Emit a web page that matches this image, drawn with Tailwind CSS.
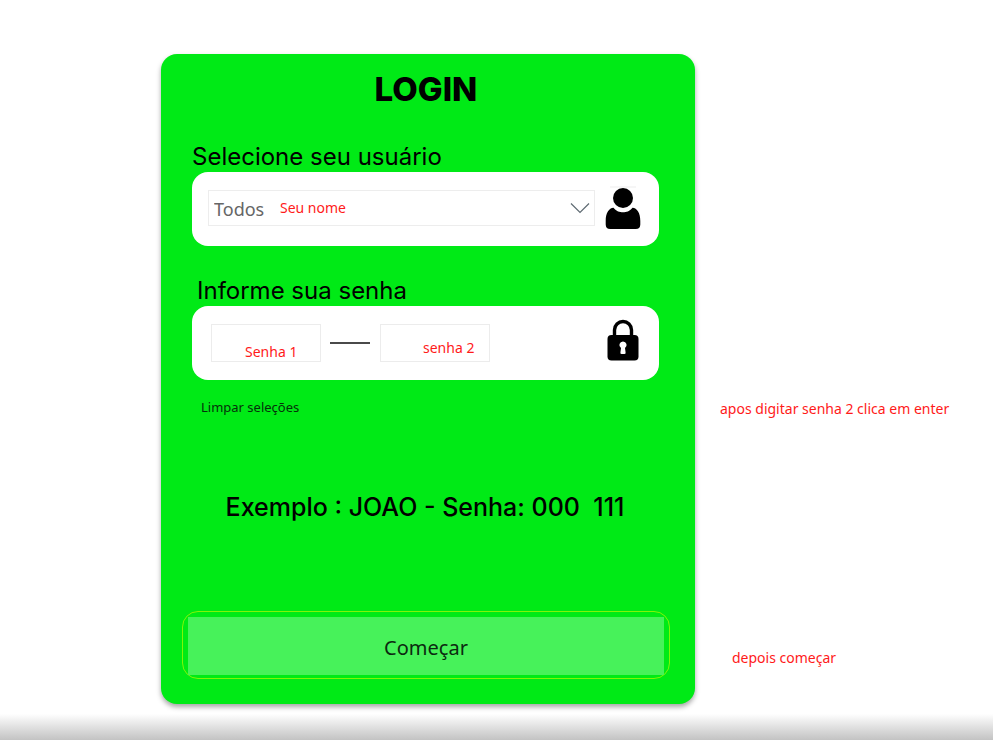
<!DOCTYPE html>
<html lang="pt-BR">
<head>
<meta charset="utf-8">
<meta name="viewport" content="width=device-width, initial-scale=1">
<title>Login</title>
<script src="https://cdn.jsdelivr.net/npm/@tailwindcss/browser@4"></script>
</head>
<body class="flex min-h-screen flex-col bg-white font-['Noto_Sans',sans-serif] text-black">
<main class="grid grow grid-cols-[161fr_534fr_298fr] pt-[54px]">
  <form class="col-start-2 flex flex-col self-start rounded-2xl bg-[#00ea16] pb-[25px] shadow-[0_3px_5px_rgba(0,0,0,0.35)]" onsubmit="return false">
    <h1 class="mt-[15px] pr-1 text-center font-['Inter',sans-serif] text-[33px] leading-10 font-extrabold">LOGIN</h1>

    <div class="mr-9 ml-[31px] mt-8 flex flex-col">
      <label for="usuario" class="pt-px font-['Inter',sans-serif] text-2xl leading-[30px]">Selecione seu usuário</label>
      <div class="flex h-[74px] items-center rounded-2xl bg-white pr-[18px] pb-0.5 pl-4">
        <div class="relative grow">
          <select id="usuario" class="block h-9 w-full appearance-none border border-[#ededed] bg-white pt-0.5 pl-[5px] text-lg text-[#666]">
            <option>Todos</option>
          </select>
          <span class="pointer-events-none absolute top-2 left-[72px] text-sm leading-5 text-[#ff1a1a]">Seu nome</span>
          <svg class="pointer-events-none absolute top-3 right-[5px] h-3 w-5" viewBox="0 0 20 12" fill="none" stroke="#5f6b73" stroke-width="1.2"><path d="M1 1.500 10 10.500 19 1.500"/></svg>
        </div>
        <svg class="ml-2.5 h-11 w-9" viewBox="0 0 36 44"><path d="M5 1h26" stroke="#ededed"/><circle cx="18" cy="12" r="10"/><path d="M8.500 21.800C11.500 25.500 14.500 26.300 18 26.300s6.500-.8 9.500-4.500c4.500.2 7.800 5.200 7.800 13.200v3.500c0 3-1.700 4.500-4.500 4.500H5.200C2.400 43 .7 41.500.7 38.500V35c0-8 3.300-13 7.800-13.200Z"/></svg>
      </div>
    </div>

    <div class="mr-9 ml-[31px] mt-[29px] flex flex-col">
      <label for="senha1" class="pt-px pl-[5px] font-['Inter',sans-serif] text-2xl leading-[30px]">Informe sua senha</label>
      <div class="flex h-[74px] items-center rounded-2xl bg-white pr-5 pl-[19px]">
        <input id="senha1" type="text" placeholder="Senha 1" class="h-[38px] w-[110px] border border-[#ececec] pt-4 pl-[33px] text-sm text-[#ff1a1a] placeholder:text-[#ff1a1a]">
        <span class="mr-2.5 ml-[9px] h-0.5 w-10 bg-[#4a4a4a]"></span>
        <input id="senha2" type="text" aria-label="Senha 2" placeholder="senha 2" class="h-[38px] w-[110px] border border-[#ececec] pt-2 pl-[42px] text-sm text-[#ff1a1a] placeholder:text-[#ff1a1a]">
        <svg class="mb-1.5 ml-auto h-[42px] w-8" viewBox="0 0 32 42"><path d="M7.500 18V11a8.500 8.500 0 0 1 17 0v7" fill="none" stroke="#000" stroke-width="3.400"/><rect x=".5" y="16" width="31" height="25.500" rx="4"/><path d="M16 22.500a3.600 3.600 0 0 1 2 6.600l.6 4.400q.2 1.500-1.200 1.500h-2.800q-1.400 0-1.200-1.500l.6-4.400a3.600 3.600 0 0 1 2-6.600Z" fill="#fff"/></svg>
      </div>
    </div>

    <button type="reset" class="mt-[17px] ml-10 self-start text-[13px] leading-5 text-[#06300a]">Limpar seleções</button>
    <p class="mt-[74px] pr-1.5 text-center font-['Inter',sans-serif] text-[25px] leading-8 font-medium whitespace-pre">Exemplo : JOAO - Senha: 000  111</p>

    <div class="mr-[25px] ml-[21px] mt-[88px] rounded-2xl border border-[#80f508] px-[5px] pt-[5px] pb-[3px]">
      <button type="submit" class="block h-[58px] w-full bg-[#47f25a] pt-1 text-xl text-[#0c2a10]">Começar</button>
    </div>
  </form>

  <aside class="flex flex-col pt-[345px] pl-[25px] text-sm leading-5 text-[#ff1a1a]">
    <p class="whitespace-nowrap">apos digitar senha 2 clica em enter</p>
    <p class="mt-[229px] pl-3">depois começar</p>
  </aside>
</main>
<footer class="h-[26px] bg-linear-to-b from-white to-[#c3c3c3]"></footer>
</body>
</html>
